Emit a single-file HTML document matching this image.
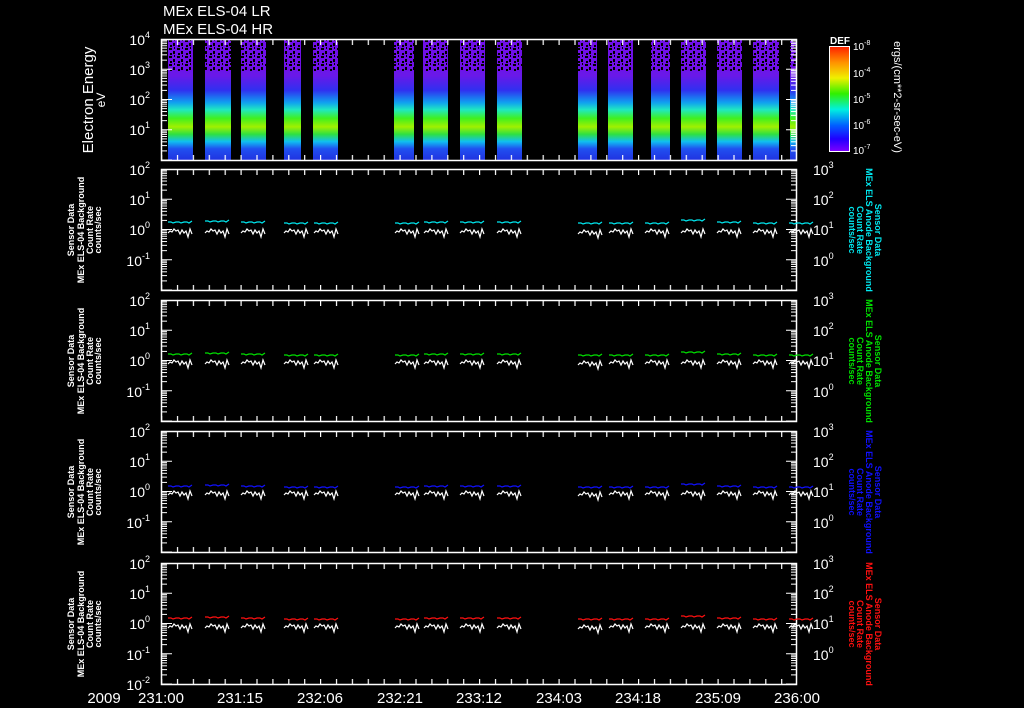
<!DOCTYPE html>
<html><head><meta charset="utf-8"><style>
html,body{margin:0;padding:0;background:#000;width:1024px;height:708px;overflow:hidden}
svg{display:block}
text{font-family:"Liberation Sans",sans-serif;fill:#fff}
.c{fill:#00e8f0}.g{fill:#00e000}.b{fill:#1010ff}.r{fill:#ff1010}
</style></head><body>
<svg width="1024" height="708" viewBox="0 0 1024 708" xmlns="http://www.w3.org/2000/svg">
<defs>
<linearGradient id="spec" x1="0" y1="0" x2="0" y2="1">
<stop offset="0" stop-color="#7010e8"/>
<stop offset="0.3" stop-color="#6a18e8"/>
<stop offset="0.42" stop-color="#3030f0"/>
<stop offset="0.52" stop-color="#10a0f0"/>
<stop offset="0.58" stop-color="#20e8c0"/>
<stop offset="0.65" stop-color="#40f020"/>
<stop offset="0.72" stop-color="#a0f000"/>
<stop offset="0.78" stop-color="#30e040"/>
<stop offset="0.84" stop-color="#10c0f0"/>
<stop offset="0.9" stop-color="#2050f0"/>
<stop offset="1" stop-color="#2030e0"/>
</linearGradient>
<linearGradient id="cb" x1="0" y1="0" x2="0" y2="1">
<stop offset="0" stop-color="#ff2000"/>
<stop offset="0.15" stop-color="#ff9000"/>
<stop offset="0.3" stop-color="#f0f000"/>
<stop offset="0.45" stop-color="#30f000"/>
<stop offset="0.6" stop-color="#00f0e0"/>
<stop offset="0.75" stop-color="#0060ff"/>
<stop offset="0.88" stop-color="#2000ff"/>
<stop offset="1" stop-color="#8000ff"/>
</linearGradient>
<pattern id="speck" width="8" height="8" patternUnits="userSpaceOnUse">
<rect width="8" height="8" fill="#7010e8"/>
<rect x="1" y="1" width="3" height="2" fill="#000"/>
<rect x="5" y="4" width="2" height="3" fill="#000"/>
<rect x="2" y="6" width="2" height="2" fill="#000"/>
<rect x="6" y="0" width="1" height="2" fill="#000"/>
</pattern>
<pattern id="xt" x="161" width="15.9" height="10" patternUnits="userSpaceOnUse">
<rect x="0" y="0" width="1.2" height="10" fill="#fff"/>
</pattern>
<g id="dec">
<rect x="0" y="-0.5" width="10" height="1" fill="#fff"/>
<rect x="0" y="-9.6" width="5" height="1" fill="#fff"/>
<rect x="0" y="-14.9" width="5" height="1" fill="#fff"/>
<rect x="0" y="-18.7" width="5" height="1" fill="#fff"/>
<rect x="0" y="-21.6" width="5" height="1" fill="#fff"/>
<rect x="0" y="-24" width="5" height="1" fill="#fff"/>
<rect x="0" y="-26.1" width="5" height="1" fill="#fff"/>
<rect x="0" y="-27.8" width="5" height="1" fill="#fff"/>
<rect x="0" y="-29.4" width="5" height="1" fill="#fff"/>
</g>
<g id="decR"><use href="#dec" transform="scale(-1,1)"/></g>
<g id="yax">
<use href="#dec" transform="translate(162,121)"/>
<use href="#dec" transform="translate(162,90.75)"/>
<use href="#dec" transform="translate(162,60.5)"/>
<use href="#dec" transform="translate(162,30.25)"/>
<use href="#decR" transform="translate(796,121)"/>
<use href="#decR" transform="translate(796,90.75)"/>
<use href="#decR" transform="translate(796,60.5)"/>
<use href="#decR" transform="translate(796,30.25)"/>
</g>
<path id="wl" d="M0,4 l2,-2 2,1 2,-3 2,2 2,-1 2,4 2,-4 2,3 2,-2 2,6 2,-8 2,5" fill="none" stroke="#fff" stroke-width="1.2"/>
<path id="cl" d="M0,0 l3,0 2,1 3,-1 3,0 2,1 3,-1 3,0 2,1 3,-2" fill="none" stroke-width="1.2"/>
<g id="pnl">
<rect x="161.5" y="0.5" width="635" height="121" fill="none" stroke="#fff" stroke-width="1.5"/>
<rect x="161" y="1" width="636" height="5" fill="url(#xt)"/>
<rect x="161" y="116" width="636" height="5" fill="url(#xt)"/>
<use href="#yax"/>
</g>
<g id="wlines"><use href="#wl" x="168" y="60"/><use href="#wl" x="205" y="60"/><use href="#wl" x="241" y="60"/><use href="#wl" x="284" y="60"/><use href="#wl" x="314" y="60"/><use href="#wl" x="395" y="60"/><use href="#wl" x="424" y="60"/><use href="#wl" x="460" y="60"/><use href="#wl" x="497" y="60"/><use href="#wl" x="578" y="61"/><use href="#wl" x="609" y="60"/><use href="#wl" x="645" y="60"/><use href="#wl" x="681" y="60"/><use href="#wl" x="717" y="60"/><use href="#wl" x="753" y="60"/><use href="#wl" x="789" y="60"/></g>
<g id="clines"><use href="#cl" x="168" y="54"/><use href="#cl" x="205" y="53"/><use href="#cl" x="241" y="54"/><use href="#cl" x="284" y="55"/><use href="#cl" x="314" y="55"/><use href="#cl" x="395" y="55"/><use href="#cl" x="424" y="54"/><use href="#cl" x="460" y="54"/><use href="#cl" x="497" y="54"/><use href="#cl" x="578" y="55"/><use href="#cl" x="609" y="55"/><use href="#cl" x="645" y="55"/><use href="#cl" x="681" y="52"/><use href="#cl" x="717" y="54"/><use href="#cl" x="753" y="55"/><use href="#cl" x="789" y="55"/></g>
</defs>

<text x="163" y="16" font-size="15">MEx ELS-04 LR</text>
<text x="163" y="34" font-size="15">MEx ELS-04 HR</text>

<g transform="translate(0,39)">
<g fill="url(#spec)">
<rect x="168" y="0" width="25" height="122"/><rect x="205" y="0" width="26" height="122"/>
<rect x="241" y="0" width="25" height="122"/><rect x="284" y="0" width="17" height="122"/>
<rect x="313" y="0" width="25" height="122"/><rect x="394" y="0" width="20" height="122"/>
<rect x="423" y="0" width="25" height="122"/><rect x="460" y="0" width="25" height="122"/>
<rect x="497" y="0" width="25" height="122"/><rect x="578" y="0" width="19" height="122"/>
<rect x="608" y="0" width="25" height="122"/><rect x="651" y="0" width="19" height="122"/>
<rect x="681" y="0" width="25" height="122"/><rect x="717" y="0" width="25" height="122"/>
<rect x="753" y="0" width="26" height="122"/><rect x="790" y="0" width="7" height="122"/>
</g>
<g fill="url(#speck)">
<rect x="168" y="0" width="25" height="32"/><rect x="205" y="0" width="26" height="32"/>
<rect x="241" y="0" width="25" height="32"/><rect x="284" y="0" width="17" height="32"/>
<rect x="313" y="0" width="25" height="32"/><rect x="394" y="0" width="20" height="32"/>
<rect x="423" y="0" width="25" height="32"/><rect x="460" y="0" width="25" height="32"/>
<rect x="497" y="0" width="25" height="32"/><rect x="578" y="0" width="19" height="32"/>
<rect x="608" y="0" width="25" height="32"/><rect x="651" y="0" width="19" height="32"/>
<rect x="681" y="0" width="25" height="32"/><rect x="717" y="0" width="25" height="32"/>
<rect x="753" y="0" width="26" height="32"/><rect x="790" y="0" width="7" height="32"/>
</g>
<use href="#pnl"/>
</g>
<g transform="translate(0,169)"><use href="#pnl"/></g>
<g transform="translate(0,300)"><use href="#pnl"/></g>
<g transform="translate(0,431)"><use href="#pnl"/></g>
<g transform="translate(0,563)"><use href="#pnl"/></g>

<g transform="translate(0,169)"><use href="#wlines"/><g stroke="#00e8f0"><use href="#clines" y="-1"/></g></g>
<g transform="translate(0,300)"><use href="#wlines"/><g stroke="#00e000"><use href="#clines"/></g></g>
<g transform="translate(0,431)"><use href="#wlines"/><g stroke="#1010ff"><use href="#clines" y="1"/></g></g>
<g transform="translate(0,563)"><use href="#wlines" y="1"/><g stroke="#ff1010"><use href="#clines" y="1"/></g></g>

<g font-size="14" text-anchor="end">
<text x="150" y="45">10<tspan font-size="9" dy="-7">4</tspan></text>
<text x="150" y="75">10<tspan font-size="9" dy="-7">3</tspan></text>
<text x="150" y="105">10<tspan font-size="9" dy="-7">2</tspan></text>
<text x="150" y="135">10<tspan font-size="9" dy="-7">1</tspan></text>
</g>
<g id="lab" font-size="14" text-anchor="end">
<text x="150" y="175">10<tspan font-size="9" dy="-7">2</tspan></text>
<text x="150" y="205">10<tspan font-size="9" dy="-7">1</tspan></text>
<text x="150" y="235">10<tspan font-size="9" dy="-7">0</tspan></text>
<text x="150" y="266">10<tspan font-size="9" dy="-7">-1</tspan></text>
</g>
<use href="#lab" y="131"/><use href="#lab" y="262"/><use href="#lab" y="394"/>
<text x="150" y="690" font-size="14" text-anchor="end">10<tspan font-size="9" dy="-7">-2</tspan></text>

<g id="rlab" font-size="14">
<text x="813" y="175">10<tspan font-size="9" dy="-7">3</tspan></text>
<text x="813" y="205">10<tspan font-size="9" dy="-7">2</tspan></text>
<text x="813" y="235">10<tspan font-size="9" dy="-7">1</tspan></text>
<text x="813" y="266">10<tspan font-size="9" dy="-7">0</tspan></text>
</g>
<use href="#rlab" y="131"/><use href="#rlab" y="262"/><use href="#rlab" y="394"/>

<text transform="translate(93,100) rotate(-90)" font-size="15" text-anchor="middle">Electron Energy</text>
<text transform="translate(105,100) rotate(-90)" font-size="12" text-anchor="middle">eV</text>

<g id="ll" font-size="9" font-weight="bold" text-anchor="middle">
<text transform="translate(74,230) rotate(-90)">Sensor Data</text>
<text transform="translate(84,230) rotate(-90)">MEx ELS-04 Background</text>
<text transform="translate(93,230) rotate(-90)">Count Rate</text>
<text transform="translate(101,230) rotate(-90)">counts/sec</text>
</g>
<use href="#ll" y="131"/><use href="#ll" y="262"/><use href="#ll" y="394"/>

<g font-size="9" font-weight="bold" text-anchor="middle">
<text class="c" transform="translate(866,230) rotate(90)">MEx ELS Anode Background</text>
<text class="c" transform="translate(875,230) rotate(90)">Sensor Data</text>
<text class="c" transform="translate(857,230) rotate(90)">Count Rate</text>
<text class="c" transform="translate(849,230) rotate(90)">counts/sec</text>
<text class="g" transform="translate(866,361) rotate(90)">MEx ELS Anode Background</text>
<text class="g" transform="translate(875,361) rotate(90)">Sensor Data</text>
<text class="g" transform="translate(857,361) rotate(90)">Count Rate</text>
<text class="g" transform="translate(849,361) rotate(90)">counts/sec</text>
<text class="b" transform="translate(866,492) rotate(90)">MEx ELS Anode Background</text>
<text class="b" transform="translate(875,492) rotate(90)">Sensor Data</text>
<text class="b" transform="translate(857,492) rotate(90)">Count Rate</text>
<text class="b" transform="translate(849,492) rotate(90)">counts/sec</text>
<text class="r" transform="translate(866,624) rotate(90)">MEx ELS Anode Background</text>
<text class="r" transform="translate(875,624) rotate(90)">Sensor Data</text>
<text class="r" transform="translate(857,624) rotate(90)">Count Rate</text>
<text class="r" transform="translate(849,624) rotate(90)">counts/sec</text>
</g>

<text x="830" y="44" font-size="10" font-weight="bold">DEF</text>
<rect x="829.5" y="46.5" width="20" height="105" fill="url(#cb)" stroke="#fff"/>
<g font-size="10">
<text x="853" y="50">10<tspan font-size="7" dy="-5">-8</tspan></text>
<text x="853" y="77">10<tspan font-size="7" dy="-5">-4</tspan></text>
<text x="853" y="103">10<tspan font-size="7" dy="-5">-5</tspan></text>
<text x="853" y="129">10<tspan font-size="7" dy="-5">-6</tspan></text>
<text x="853" y="154">10<tspan font-size="7" dy="-5">-7</tspan></text>
</g>
<text transform="translate(894,97) rotate(90)" font-size="11" text-anchor="middle">ergs/(cm**2-sr-sec-eV)</text>

<g font-size="15" text-anchor="middle">
<text x="104" y="703">2009</text>
<text x="161" y="703">231:00</text>
<text x="240" y="703">231:15</text>
<text x="320" y="703">232:06</text>
<text x="400" y="703">232:21</text>
<text x="479" y="703">233:12</text>
<text x="559" y="703">234:03</text>
<text x="638" y="703">234:18</text>
<text x="718" y="703">235:09</text>
<text x="797" y="703">236:00</text>
</g>
</svg>
</body></html>
